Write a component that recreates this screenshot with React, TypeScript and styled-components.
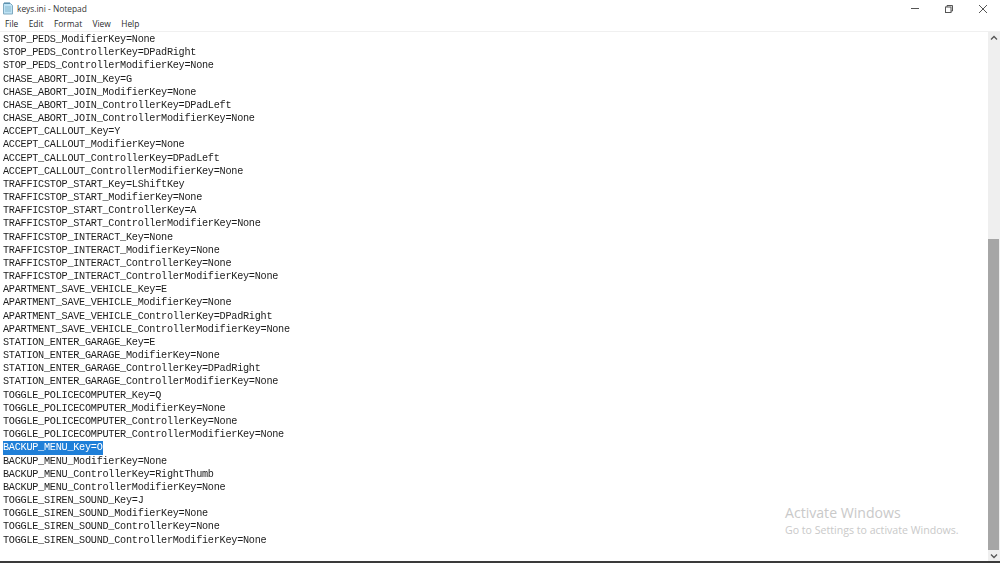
import React from "react";
import styled, { createGlobalStyle } from "styled-components";

const Global = createGlobalStyle`
  html, body { margin: 0; padding: 0; width: 1000px; height: 563px; overflow: hidden; background: #fff; }
  #root { width: 1000px; height: 563px; }
`;

const Window = styled.div`
  position: relative;
  width: 1000px;
  height: 563px;
  display: flex;
  flex-direction: column;
  background: #fff;
  overflow: hidden;
  font-family: "Open Sans", "Noto Sans", sans-serif;
`;

const TitleBar = styled.div`
  height: 17px;
  display: flex;
  align-items: center;
  padding-left: 2px;
  gap: 3px;
  flex: none;
`;

const TitleText = styled.span`
  font-size: 8.4px;
  color: #333;
  flex: 1;
`;

const Controls = styled.div`
  display: flex;
  align-items: center;
  height: 16px;
`;

const ControlButton = styled.div`
  width: 34px;
  height: 16px;
  display: flex;
  align-items: center;
  justify-content: center;
  svg { display: block; }
`;

const MenuBar = styled.div`
  height: 13px;
  display: flex;
  align-items: center;
  padding: 0 0 1px 5px;
  gap: 10.4px;
  flex: none;
  border-bottom: 1px solid #f0f0f0;
`;

const MenuItem = styled.span`
  font-size: 8.4px;
  color: #2b2b2b;
`;

const Body = styled.div`
  flex: 1;
  min-height: 0;
  display: flex;
`;

const Editor = styled.div`
  flex: 1;
  padding: 1px 0 0 3px;
  overflow: hidden;
`;

const Line = styled.div`
  height: 13.18px;
  line-height: 13.18px;
  font-family: "Liberation Mono", "DejaVu Sans Mono", monospace;
  font-size: 10.2px;
  letter-spacing: -0.26px;
  color: #1c1c1c;
  white-space: pre;
  filter: blur(0.2px);
`;

const Selection = styled.span`
  background: #1f7fd8;
  color: #ffffff;
  display: inline-block;
  width: 100px;
`;

const Scrollbar = styled.div`
  width: 12px;
  flex: none;
  display: flex;
  flex-direction: column;
  background: #efefef;
`;

const ArrowBox = styled.div`
  height: 11px;
  flex: none;
  display: flex;
  align-items: center;
  justify-content: center;
`;

const Track = styled.div<{ $grow: number }>`
  flex: ${(p) => p.$grow} 0 0;
`;

const Thumb = styled.div<{ $grow: number }>`
  flex: ${(p) => p.$grow} 0 0;
  background: #a6a6a6;
  margin-right: 1px;
`;

const BottomEdge = styled.div`
  height: 2px;
  flex: none;
  background: #3a3a3a;
`;

const Watermark = styled.div`
  position: absolute;
  left: 785px;
  top: 504px;
  color: #c9c9c9;
  font-family: "Open Sans", "Noto Sans", sans-serif;
`;

const WatermarkTitle = styled.div`
  font-size: 14.1px;
  line-height: 18px;
`;

const WatermarkSub = styled.div`
  font-size: 10.6px;
  line-height: 16px;
`;

const NotepadIcon = () => (
  <svg width="12" height="13" viewBox="0 0 12 13">
    <path d="M1.5 1.5h7l2 2v8.5h-9z" fill="#bfe3f5" stroke="#7fa9bf" strokeWidth="1" />
    <path d="M3 5h6M3 7h6M3 9h6" stroke="#6ea3bd" strokeWidth="0.7" />
    <path d="M2 1h6" stroke="#3d7da0" strokeWidth="1" />
  </svg>
);

const lines = [
  "STOP_PEDS_ModifierKey=None",
  "STOP_PEDS_ControllerKey=DPadRight",
  "STOP_PEDS_ControllerModifierKey=None",
  "CHASE_ABORT_JOIN_Key=G",
  "CHASE_ABORT_JOIN_ModifierKey=None",
  "CHASE_ABORT_JOIN_ControllerKey=DPadLeft",
  "CHASE_ABORT_JOIN_ControllerModifierKey=None",
  "ACCEPT_CALLOUT_Key=Y",
  "ACCEPT_CALLOUT_ModifierKey=None",
  "ACCEPT_CALLOUT_ControllerKey=DPadLeft",
  "ACCEPT_CALLOUT_ControllerModifierKey=None",
  "TRAFFICSTOP_START_Key=LShiftKey",
  "TRAFFICSTOP_START_ModifierKey=None",
  "TRAFFICSTOP_START_ControllerKey=A",
  "TRAFFICSTOP_START_ControllerModifierKey=None",
  "TRAFFICSTOP_INTERACT_Key=None",
  "TRAFFICSTOP_INTERACT_ModifierKey=None",
  "TRAFFICSTOP_INTERACT_ControllerKey=None",
  "TRAFFICSTOP_INTERACT_ControllerModifierKey=None",
  "APARTMENT_SAVE_VEHICLE_Key=E",
  "APARTMENT_SAVE_VEHICLE_ModifierKey=None",
  "APARTMENT_SAVE_VEHICLE_ControllerKey=DPadRight",
  "APARTMENT_SAVE_VEHICLE_ControllerModifierKey=None",
  "STATION_ENTER_GARAGE_Key=E",
  "STATION_ENTER_GARAGE_ModifierKey=None",
  "STATION_ENTER_GARAGE_ControllerKey=DPadRight",
  "STATION_ENTER_GARAGE_ControllerModifierKey=None",
  "TOGGLE_POLICECOMPUTER_Key=Q",
  "TOGGLE_POLICECOMPUTER_ModifierKey=None",
  "TOGGLE_POLICECOMPUTER_ControllerKey=None",
  "TOGGLE_POLICECOMPUTER_ControllerModifierKey=None",
  "BACKUP_MENU_Key=O",
  "BACKUP_MENU_ModifierKey=None",
  "BACKUP_MENU_ControllerKey=RightThumb",
  "BACKUP_MENU_ControllerModifierKey=None",
  "TOGGLE_SIREN_SOUND_Key=J",
  "TOGGLE_SIREN_SOUND_ModifierKey=None",
  "TOGGLE_SIREN_SOUND_ControllerKey=None",
  "TOGGLE_SIREN_SOUND_ControllerModifierKey=None",
];

export default function App() {
  return (
    <Window>
      <Global />
      <TitleBar>
        <NotepadIcon />
        <TitleText>keys.ini - Notepad</TitleText>
        <Controls>
          <ControlButton>
            <svg width="10" height="10" viewBox="0 0 10 10"><path d="M1 4.5h8" stroke="#555" strokeWidth="1" /></svg>
          </ControlButton>
          <ControlButton>
            <svg width="10" height="10" viewBox="0 0 10 10" fill="none" stroke="#555" strokeWidth="1"><rect x="1.5" y="3" width="5.5" height="5.5" /><path d="M3 3V1.5h5.5V7H7" /></svg>
          </ControlButton>
          <ControlButton>
            <svg width="10" height="10" viewBox="0 0 10 10"><path d="M1 1l8 8M9 1l-8 8" stroke="#555" strokeWidth="1" /></svg>
          </ControlButton>
        </Controls>
      </TitleBar>
      <MenuBar>
        {["File", "Edit", "Format", "View", "Help"].map((m) => (
          <MenuItem key={m}>{m}</MenuItem>
        ))}
      </MenuBar>
      <Body>
        <Editor>
          {lines.map((l) => (
            <Line key={l}>{l === "BACKUP_MENU_Key=O" ? <Selection>{l}</Selection> : l}</Line>
          ))}
        </Editor>
        <Scrollbar>
          <ArrowBox>
            <svg width="8" height="6" viewBox="0 0 8 6"><path d="M1 4.5L4 1.5l3 3" fill="none" stroke="#555" strokeWidth="1.3" /></svg>
          </ArrowBox>
          <Track $grow={197} />
          <Thumb $grow={312} />
          <ArrowBox>
            <svg width="8" height="6" viewBox="0 0 8 6"><path d="M1 1.5L4 4.5l3-3" fill="none" stroke="#555" strokeWidth="1.3" /></svg>
          </ArrowBox>
        </Scrollbar>
      </Body>
      <BottomEdge />
      <Watermark>
        <WatermarkTitle>Activate Windows</WatermarkTitle>
        <WatermarkSub>Go to Settings to activate Windows.</WatermarkSub>
      </Watermark>
    </Window>
  );
}
